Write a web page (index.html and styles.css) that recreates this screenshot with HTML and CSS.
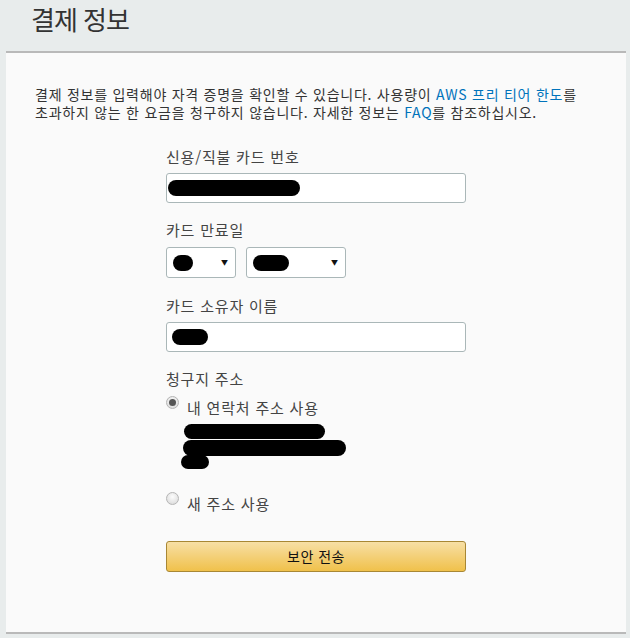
FILE: index.html
```html
<!DOCTYPE html>
<html lang="ko">
<head>
<meta charset="utf-8">
<link rel="stylesheet" href="styles.css">
</head>
<body>
<h1 class="title">결제 정보</h1>
<div class="panel">
  <p class="intro"><span class="line">결제 정보를 입력해야 자격 증명을 확인할 수 있습니다. 사용량이 <a href="#">AWS 프리 티어 한도</a>를</span><span class="line">초과하지 않는 한 요금을 청구하지 않습니다. 자세한 정보는 <a href="#">FAQ</a>를 참조하십시오.</span></p>
  <form class="form">
    <label class="label">신용/직불 카드 번호</label>
    <div class="input"><span class="blob blob-card"></span></div>

    <label class="label">카드 만료일</label>
    <div class="selects">
      <div class="select sel-month"><span class="blob blob-m"></span><span class="arrow">▼</span></div>
      <div class="select sel-year"><span class="blob blob-y"></span><span class="arrow">▼</span></div>
    </div>

    <label class="label">카드 소유자 이름</label>
    <div class="input"><span class="blob blob-name"></span></div>

    <label class="label label-addr">청구지 주소</label>
    <div class="radio-row"><span class="radio checked"></span><span class="radio-text">내 연락처 주소 사용</span></div>
    <div class="address">
      <span class="blob a1"></span>
      <span class="blob a2"></span>
      <span class="blob a3"></span>
    </div>
    <div class="radio-row second"><span class="radio"></span><span class="radio-text">새 주소 사용</span></div>

    <div class="button">보안 전송</div>
  </form>
</div>
</body>
</html>
```
FILE: styles.css
```css
html, body {
  margin: 0;
  padding: 0;
  background: #e8ecec;
  font-family: "Noto Sans CJK KR", "Noto Sans", sans-serif;
  color: #333;
}
.title {
  margin: 0;
  height: 51px;
  padding-left: 31px;
  padding-top: 0;
  box-sizing: border-box;
  font-size: 26px;
  font-weight: 400;
  line-height: normal;
  letter-spacing: -1px;
  color: #333;
}
.panel {
  margin-left: 6px;
  width: 620px;
  height: 583px;
  background: #fafafa;
  border-top: 2px solid #b9b9b9;
  border-bottom: 2px solid #b9b9b9;
  box-sizing: border-box;
}
.intro {
  margin: 0;
  padding: 32px 0 0 29px;
  font-size: 14px;
  color: #333;
  letter-spacing: 0.75px;
  white-space: nowrap;
  display: flex;
  flex-direction: column;
}
.intro .line {
  display: block;
  height: 18px;
  line-height: 18px;
}
.intro a {
  color: #0073bb;
  text-decoration: none;
}
.form {
  margin: 26px 0 0 160px;
  width: 300px;
  display: flex;
  flex-direction: column;
}
.label {
  font-size: 15px;
  line-height: 20px;
  color: #444;
  letter-spacing: 0.8px;
  margin-bottom: 6px;
}
.input {
  height: 30px;
  box-sizing: border-box;
  border: 1px solid #aab7b8;
  border-radius: 3px;
  background: #fff;
  display: flex;
  align-items: center;
  padding-left: 1px;
  margin-bottom: 17px;
}
.blob {
  display: block;
  background: #000;
  border-radius: 8px;
}
.blob-card { width: 132px; height: 16px; }
.blob-name { width: 36px; height: 16px; margin-left: 4px; }
.selects {
  display: flex;
  gap: 10px;
  margin-top: 1px;
  margin-bottom: 18px;
}
.select {
  height: 31px;
  box-sizing: border-box;
  border: 1px solid #aab7b8;
  border-radius: 3px;
  background: #fff;
  display: flex;
  align-items: center;
  justify-content: space-between;
  padding: 0 7px 0 6px;
}
.sel-month { width: 70px; }
.sel-year { width: 100px; }
.blob-m { width: 20px; height: 16px; }
.blob-y { width: 36px; height: 16px; }
.arrow {
  font-size: 7px;
  color: #111;
  line-height: 1;
}
.label-addr { margin-bottom: 9px; }
.radio-row {
  display: flex;
  align-items: flex-start;
  height: 20px;
}
.radio {
  width: 13px;
  height: 13px;
  border-radius: 50%;
  box-sizing: border-box;
  border: 1px solid #b5b5b5;
  background: radial-gradient(circle at 50% 35%, #fcfcfc, #d6d6d6);
  margin-top: -2px;
  margin-right: 8px;
  position: relative;
}
.radio.checked::after {
  content: "";
  position: absolute;
  left: 2px;
  top: 2px;
  width: 7px;
  height: 7px;
  border-radius: 50%;
  background: #555;
}
.radio-text {
  font-size: 15px;
  line-height: 20px;
  color: #444;
  letter-spacing: 0.8px;
}
.address {
  position: relative;
  height: 76px;
}
.address .blob { position: absolute; }
.a1 { left: 18px; top: 6px; width: 141px; height: 15px; }
.a2 { left: 17px; top: 22px; width: 163px; height: 16px; }
.a3 { left: 15px; top: 37px; width: 28px; height: 14px; }
.radio-row.second { margin-bottom: 27px; }
.button {
  height: 31px;
  box-sizing: border-box;
  border: 1px solid #a88734;
  border-radius: 3px;
  background: linear-gradient(#f7dfa5, #f0c14b);
  text-align: center;
  font-size: 14px;
  line-height: 29px;
  color: #111;
  letter-spacing: 0.5px;
}
```
